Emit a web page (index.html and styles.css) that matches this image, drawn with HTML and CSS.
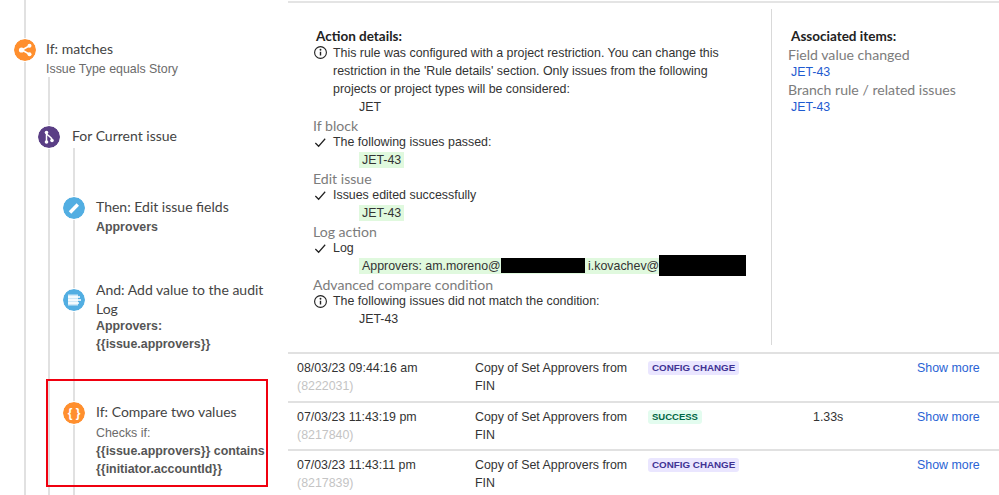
FILE: index.html
```html
<!DOCTYPE html>
<html lang="en">
<head>
<meta charset="utf-8">
<title>Automation audit log</title>
<link rel="stylesheet" href="styles.css">
</head>
<body>
<div class="page">
  <aside class="tree">
    <div class="branch l0">
      <div class="node n-if">
        <span class="icon orange"><svg viewBox="0 0 22 22" width="22" height="22"><path d="M15.5 6.8 8 11l7.5 4.2" fill="none" stroke="#fff" stroke-width="1.6"/><circle cx="7.5" cy="11" r="2.6" fill="#fff"/><circle cx="15.5" cy="6.8" r="2" fill="#fff"/><circle cx="15.5" cy="15.2" r="2" fill="#fff"/></svg></span>
        <div class="title">If: matches</div>
        <div class="sub s-gap">Issue Type equals Story</div>
      </div>
      <div class="branch l1">
        <div class="node n-for">
          <span class="icon purple"><svg viewBox="0 0 22 22" width="22" height="22"><path d="M8.5 7v9M8.5 7c.5 3 5.5 3.500 5.500 7" fill="none" stroke="#fff" stroke-width="1.5"/><circle cx="8.500" cy="6.500" r="1.800" fill="#fff"/><circle cx="8.500" cy="16" r="1.800" fill="#fff"/><circle cx="14" cy="14.500" r="1.800" fill="#fff"/></svg></span>
          <div class="title">For Current issue</div>
        </div>
        <div class="branch l2">
          <div class="node n-then">
            <span class="icon blue"><svg viewBox="0 0 22 22" width="22" height="22"><path d="M7 15.500 14.800 7.500" stroke="#fff" stroke-width="3.400" fill="none"/></svg></span>
            <div class="title">Then: Edit issue fields</div>
            <div class="bold b-gap">Approvers</div>
          </div>
          <div class="node n-log">
            <span class="icon blue low"><svg viewBox="0 0 22 22" width="22" height="22"><path d="M5 5.500h10v11H5z" fill="#cfe8f7"/><path d="M5 8h12M5 11h13M5 14h11" stroke="#fff" stroke-width="1.300"/></svg></span>
            <div class="title t-wrap">And: Add value to the audit Log</div>
            <div class="bold">Approvers:</div>
            <div class="bold">{{issue.approvers}}</div>
          </div>
          <div class="node n-cmp">
            <span class="icon orange"><span class="braces">{ }</span></span>
            <div class="title">If: Compare two values</div>
            <div class="sub s-check">Checks if:</div>
            <div class="bold">{{issue.approvers}} contains {{initiator.accountId}}</div>
            <div class="highlight"></div>
          </div>
        </div>
      </div>
    </div>
  </aside>

  <main class="main">
    <section class="details">
      <div class="actions">
        <h4 class="head">Action details:</h4>
        <div class="msg msg-long"><svg class="gl" viewBox="0 0 16 16" width="15" height="15"><circle cx="8" cy="8" r="6.300" fill="none" stroke="#222" stroke-width="1.200"/><path d="M8 7.200v4" stroke="#222" stroke-width="1.500"/><circle cx="8" cy="5" r="1" fill="#222"/></svg><div>This rule was configured with a project restriction. You can change this restriction in the 'Rule details' section. Only issues from the following projects or project types will be considered:</div></div>
        <div class="item"><span class="plain">JET</span></div>

        <div class="group">If block</div>
        <div class="msg"><svg class="gl" viewBox="0 0 16 16" width="15" height="15"><path d="M2.500 8.500 6 12l7-8" fill="none" stroke="#222" stroke-width="1.300"/></svg><div>The following issues passed:</div></div>
        <div class="item"><span class="ok">JET-43</span></div>

        <div class="group">Edit issue</div>
        <div class="msg"><svg class="gl" viewBox="0 0 16 16" width="15" height="15"><path d="M2.500 8.500 6 12l7-8" fill="none" stroke="#222" stroke-width="1.300"/></svg><div>Issues edited successfully</div></div>
        <div class="item"><span class="ok">JET-43</span></div>

        <div class="group">Log action</div>
        <div class="msg"><svg class="gl" viewBox="0 0 16 16" width="15" height="15"><path d="M2.500 8.500 6 12l7-8" fill="none" stroke="#222" stroke-width="1.300"/></svg><div>Log</div></div>
        <div class="item"><span class="ok ok-log">Approvers: am.moreno@<span class="red r1"></span> i.kovachev@<span class="red r2"></span></span></div>

        <div class="group">Advanced compare condition</div>
        <div class="msg"><svg class="gl" viewBox="0 0 16 16" width="15" height="15"><circle cx="8" cy="8" r="6.300" fill="none" stroke="#222" stroke-width="1.200"/><path d="M8 7.200v4" stroke="#222" stroke-width="1.500"/><circle cx="8" cy="5" r="1" fill="#222"/></svg><div>The following issues did not match the condition:</div></div>
        <div class="item"><span class="plain">JET-43</span></div>
      </div>
      <div class="assoc">
        <h4 class="head">Associated items:</h4>
        <div class="group">Field value changed</div>
        <a class="link" href="#">JET-43</a>
        <div class="group">Branch rule / related issues</div>
        <a class="link" href="#">JET-43</a>
      </div>
    </section>

    <section class="rows">
      <div class="row">
        <div><div>08/03/23 09:44:16 am</div><div class="muted">(8222031)</div></div>
        <div>Copy of Set Approvers from FIN</div>
        <div><span class="pill config">CONFIG CHANGE</span></div>
        <div></div>
        <div class="more">Show more</div>
      </div>
      <div class="row">
        <div><div>07/03/23 11:43:19 pm</div><div class="muted">(8217840)</div></div>
        <div>Copy of Set Approvers from FIN</div>
        <div><span class="pill success">SUCCESS</span></div>
        <div>1.33s</div>
        <div class="more">Show more</div>
      </div>
      <div class="row">
        <div><div>07/03/23 11:43:11 pm</div><div class="muted">(8217839)</div></div>
        <div>Copy of Set Approvers from FIN</div>
        <div><span class="pill config">CONFIG CHANGE</span></div>
        <div></div>
        <div class="more">Show more</div>
      </div>
    </section>
  </main>
</div>
</body>
</html>
```
FILE: styles.css
```css
* { box-sizing: border-box; }
html, body { margin: 0; padding: 0; background: #fff; }
body { width: 999px; height: 495px; overflow: hidden; font-family: "Liberation Sans", Arial, sans-serif; font-size: 12.400px; color: #333; }
.page { display: flex; height: 495px; }

/* tree */
.tree { width: 288px; flex: none; height: 495px; overflow: hidden; padding-left: 24px; }
.branch { border-left: 2px solid #e1e1e1; }
.l0 { height: 495px; padding-top: 39px; }
.l1 { margin-left: 22px; margin-top: -1px; padding-top: 49px; height: 420px; }
.l2 { margin-left: 23px; margin-top: 2px; padding-top: 49px; height: 350px; }
.node { position: relative; }
.n-if { padding-left: 20px; }
.n-for { padding-left: 22px; }
.n-then, .n-log, .n-cmp { padding-left: 21px; }
.n-log { margin-top: 43px; width: 195px; }
.n-cmp { margin-top: 48px; width: 195px; }
.title { font-family: Lato, sans-serif; font-size: 14px; line-height: 20px; color: #444; }
.t-wrap { line-height: 19px; margin-bottom: -1px; }
.sub { font-size: 12.400px; line-height: 18px; color: #6b6b6b; }
.s-gap { margin-top: 1px; }
.s-check { margin-top: 2px; }
.bold { font-size: 12.400px; line-height: 18.500px; font-weight: 700; color: #555; }
.b-gap { margin-top: 1px; }
.icon { position: absolute; top: -1px; left: -13px; width: 24px; height: 24px; border-radius: 50%; border: 1px solid #fff; display: flex; align-items: center; justify-content: center; }
.icon.low { top: 8px; }
.orange { background: #ff8f2e; background-clip: padding-box; }
.purple { background: #5a3e85; background-clip: padding-box; }
.blue { background: #52aee2; background-clip: padding-box; }
.braces { color: #fff; font-weight: 700; font-size: 12px; line-height: 20px; white-space: nowrap; }
.highlight { position: absolute; left: -29px; top: -23px; width: 222px; height: 108px; border: 2.500px solid #f0000f; }

/* main */
.main { flex: 1; border-top: 2px solid #e4e4e4; margin-top: 1px; min-width: 0; }
.details { display: flex; height: 349px; padding-top: 6px; }
.actions { width: 484px; padding: 19px 0 0 25px; border-right: 1px solid #d9d9d9; height: 336px; }
.assoc { padding: 19px 0 0 16px; }
.head { margin: 0 0 0 3px; font-family: Lato, sans-serif; font-size: 13.500px; font-weight: 700; line-height: 16px; color: #222; }
.msg { display: flex; line-height: 17px; color: #333; }
.msg-long { line-height: 18px; }
.msg > div { width: 392px; }
.gl { flex: none; width: 15px; height: 15px; margin: 1px 5px 0 0; }
.item { padding: 1px 0 0 46px; line-height: 17px; height: 17px; }
.plain { color: #333; }
.ok { background: #e0f9de; padding: 0 3px; display: block; width: fit-content; line-height: 16px; color: #333; }
.ok-log { width: 386px; height: 16px; white-space: nowrap; }
.red { display: inline-block; background: #000; vertical-align: top; }
.r1 { width: 84px; height: 15px; }
.r2 { width: 87px; height: 21px; margin-top: -3px; }
.group { font-family: Lato, sans-serif; font-size: 14.100px; line-height: 16px; margin-top: 3px; color: #7c7c7c; }
.assoc .group { margin-top: 1px; }
.assoc .head + .group { margin-top: 3px; }
.link { display: block; padding: 1px 0 0 3px; line-height: 17px; color: #1f5bd0; text-decoration: none; }

/* rows */
.row { display: grid; grid-template-columns: 178px 173px 165px 104px 1fr; height: 48.500px; border-top: 2px solid #e1e1e1; padding: 5px 0 0 9px; line-height: 18px; color: #333; }
.row > div:nth-child(2) { padding-right: 15px; }
.muted { color: #c4c4c4; }
.more { color: #2a63d4; }
.pill { display: inline-block; height: 14px; margin-top: 2px; padding: 0 4px; border-radius: 3px; font-size: 9.800px; line-height: 14px; font-weight: 700; vertical-align: top; }
.config { background: #eae6ff; color: #403294; }
.success { background: #e3fcef; color: #006644; font-size: 9.500px; }
```
